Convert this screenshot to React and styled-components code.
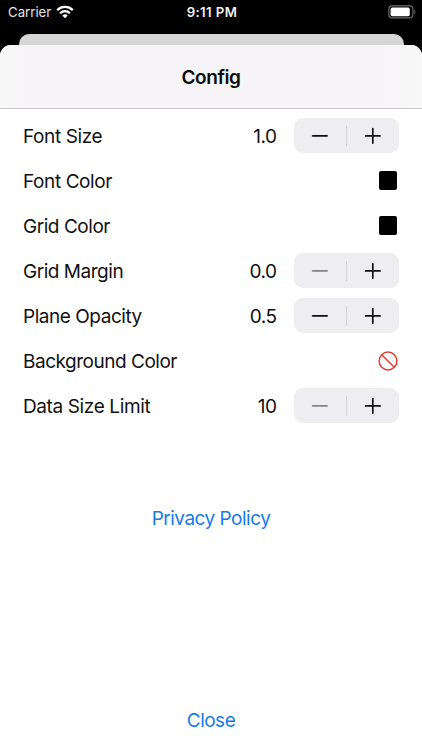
import React from "react";
import styled, { createGlobalStyle } from "styled-components";

const GlobalStyle = createGlobalStyle`
  * { box-sizing: border-box; }
  body { margin: 0; background: #000; }
`;

const Screen = styled.div`
  width: 422px;
  height: 750px;
  display: flex;
  flex-direction: column;
  overflow: hidden;
  background: #000;
  color: #111;
  font-family: Inter, "Liberation Sans", sans-serif;
  font-size: 19px;
  line-height: 24px;
`;

const StatusBar = styled.header`
  display: grid;
  grid-template-columns: 1fr auto 1fr;
  align-items: center;
  height: 34px;
  padding: 0 6px 10px 8px;
  color: #fff;
  font-size: 13.2px;
  line-height: 24px;
`;

const Carrier = styled.div`
  display: flex;
  align-items: center;
  gap: 5px;
  color: #e4e4e4;
  letter-spacing: 0;
`;

const Clock = styled.time`
  font-weight: 600;
  font-size: 13.2px;
  letter-spacing: 0.42px;
  color: #f2f2f2;
`;

const BatteryIcon = styled.svg`
  justify-self: end;
  margin-bottom: 1px;
`;

const BackCard = styled.div`
  flex: none;
  height: 11px;
  margin: 0 18.5px;
  border-radius: 10px 10px 0 0;
  background: #d7d6d7;
`;

const Sheet = styled.main`
  flex: 1;
  display: flex;
  flex-direction: column;
  border-radius: 11px 11px 0 0;
  overflow: hidden;
  background: #fff;
`;

const SheetHeader = styled.div`
  display: flex;
  align-items: center;
  justify-content: center;
  height: 64px;
  padding-top: 2px;
  border-bottom: 1px solid #cbcacb;
  background: linear-gradient(90deg, #f9f8f9 0, #f6f4f6 26px, #f6f4f6 380px, #f9f8f9 100%);
`;

const Title = styled.h1`
  margin: 0;
  font-size: 19px;
  font-weight: 600;
  line-height: 24px;
  letter-spacing: -0.4px;
  color: #0c0c0c;
`;

const Settings = styled.div`
  display: flex;
  flex-direction: column;
  padding: 4px 23px 0;
`;

const Row = styled.div`
  display: flex;
  align-items: center;
  height: 45px;
`;

const Label = styled.span`
  flex: 1;
  padding-top: 2px;
  letter-spacing: ${(p) => p.$spacing}px;
`;

const Value = styled.span`
  margin-right: 17px;
  padding-top: 2px;
  letter-spacing: -0.5px;
`;

const Stepper = styled.div`
  display: flex;
  align-items: center;
  width: 105.5px;
  height: 35.5px;
  border-radius: 9px;
  background: #eeeef0;
`;

const StepButton = styled.button`
  flex: 1;
  display: flex;
  align-items: center;
  justify-content: center;
  height: 100%;
  padding: 0;
  border: 0;
  background: none;
  color: ${(p) => (p.disabled ? "#858587" : "#111")};
`;

const Divider = styled.span`
  width: 1px;
  height: 20px;
  background: #d4d4d6;
`;

const Swatch = styled.span`
  width: 18px;
  height: 19px;
  margin-right: 2px;
  border-radius: 2px;
  background: #000;
`;

const NoColorIcon = styled.svg`
  margin: 0 1px 1px 0;
`;

const LinkButton = styled.button`
  align-self: center;
  margin: ${(p) => p.$margin};
  padding: 0;
  border: 0;
  background: none;
  color: #177be8;
  font: inherit;
  letter-spacing: -0.5px;
`;

const settings = [
  { label: "Font Size", spacing: -0.4, value: "1.0" },
  { label: "Font Color", spacing: -0.4, color: true },
  { label: "Grid Color", spacing: -0.46, color: true },
  { label: "Grid Margin", spacing: -0.47, value: "0.0", atMin: true },
  { label: "Plane Opacity", spacing: -0.46, value: "0.5" },
  { label: "Background Color", spacing: -0.48 },
  { label: "Data Size Limit", spacing: -0.38, value: "10", atMin: true },
];

function StepperControl({ label, atMin }) {
  return (
    <Stepper>
      <StepButton disabled={atMin} aria-label={`Decrease ${label}`}>
        <svg width="18" height="18" viewBox="0 0 18 18" stroke="currentColor" strokeWidth="1.6" strokeLinecap="round">
          <path d="M1.6 8.9h14.6" />
        </svg>
      </StepButton>
      <Divider />
      <StepButton aria-label={`Increase ${label}`}>
        <svg width="18" height="18" viewBox="0 0 18 18" stroke="currentColor" strokeWidth="1.7" strokeLinecap="round">
          <path d="M1.6 8.9h14.4M8.8 1.7v14.4" />
        </svg>
      </StepButton>
    </Stepper>
  );
}

function Setting({ label, spacing, value, color, atMin }) {
  return (
    <Row>
      <Label $spacing={spacing}>{label}</Label>
      {value && <Value>{value}</Value>}
      {value && <StepperControl label={label} atMin={atMin} />}
      {color && <Swatch />}
      {!value && !color && (
        <NoColorIcon width="20" height="21" viewBox="0 -0.5 20 21" fill="none" stroke="#e8392f" strokeWidth="1.5">
          <circle cx="10" cy="10.5" r="8.9" />
          <path d="M3.7 4.2l12.6 12.6" />
        </NoColorIcon>
      )}
    </Row>
  );
}

export default function App() {
  return (
    <Screen>
      <GlobalStyle />
      <StatusBar>
        <Carrier>
          Carrier
          <svg width="18" height="14" viewBox="0 0 18 14" fill="none" stroke="#fff" strokeWidth="2.3">
            <path d="M1.2 5.1a11.2 11.2 0 0 1 15.6 0" />
            <path d="M4.1 8.2a7 7 0 0 1 9.8 0" />
            <path d="M9 13.2L6.3 10.5a3.8 3.8 0 0 1 5.4 0z" fill="#fff" stroke="none" />
          </svg>
        </Carrier>
        <Clock>9:11 PM</Clock>
        <BatteryIcon width="28" height="14" viewBox="0 0 28 14">
          <rect x="0.9" y="0.9" width="24" height="12" rx="3.2" fill="none" stroke="#6d6d6d" strokeWidth="1.2" />
          <rect x="2.6" y="2.6" width="19.2" height="8.7" rx="1.8" fill="#fff" />
          <path d="M26.3 4.8c1.6.7 1.6 3.7 0 4.4z" fill="#6d6d6d" />
        </BatteryIcon>
      </StatusBar>
      <BackCard />
      <Sheet>
        <SheetHeader>
          <Title>Config</Title>
        </SheetHeader>
        <Settings>
          {settings.map((s) => (
            <Setting key={s.label} {...s} />
          ))}
        </Settings>
        <LinkButton $margin="79px 0 0">Privacy Policy</LinkButton>
        <LinkButton $margin="auto 0 17px">Close</LinkButton>
      </Sheet>
    </Screen>
  );
}
